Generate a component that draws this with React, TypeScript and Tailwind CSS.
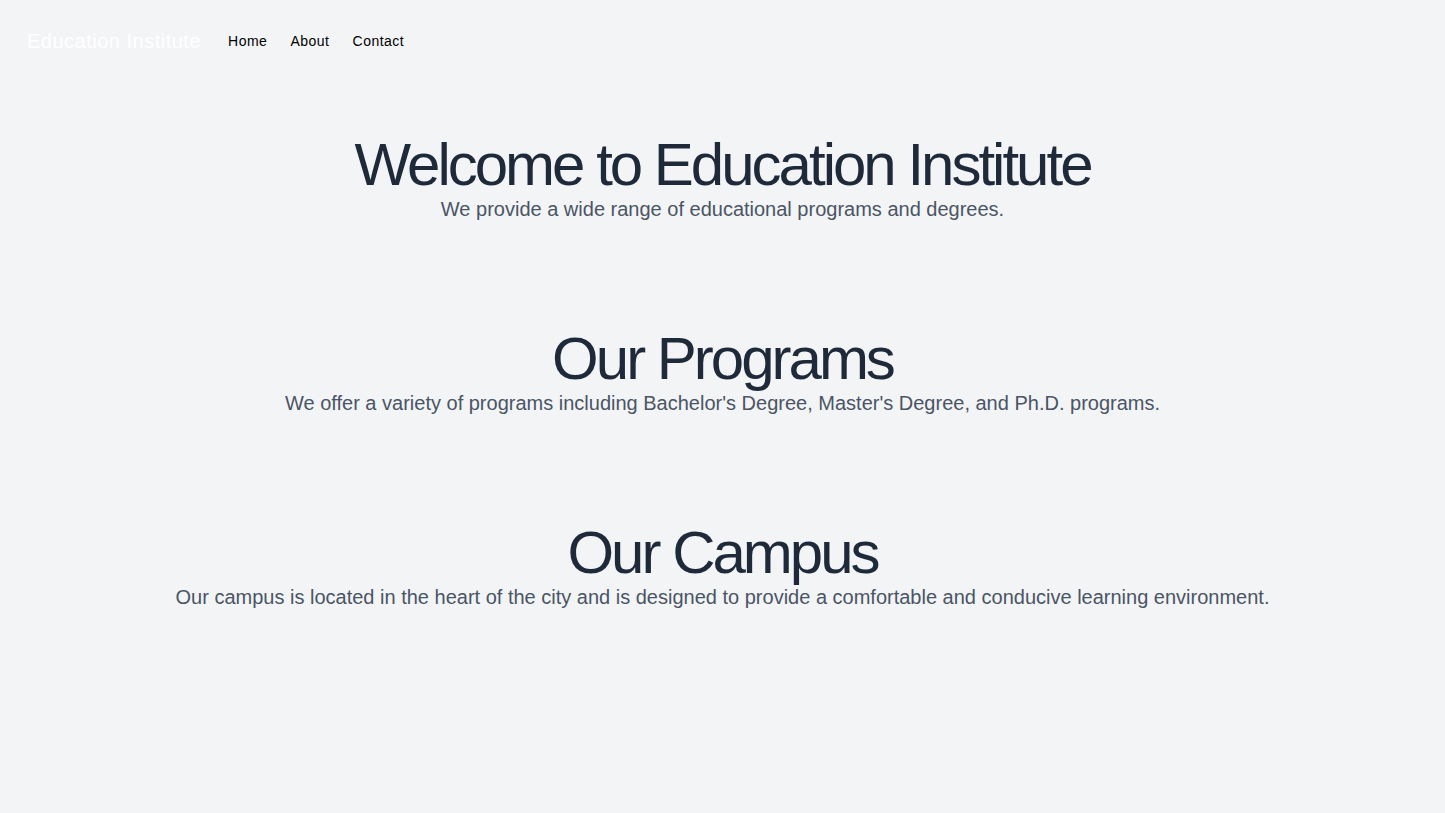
export default function App() {
  const sections = [
    {
      title: 'Welcome to Education Institute',
      text: 'We provide a wide range of educational programs and degrees.',
    },
    {
      title: 'Our Programs',
      text: "We offer a variety of programs including Bachelor's Degree, Master's Degree, and Ph.D. programs.",
    },
    {
      title: 'Our Campus',
      text: 'Our campus is located in the heart of the city and is designed to provide a comfortable and conducive learning environment.',
    },
  ]

  return (
    <div className="min-h-screen bg-gray-100 font-['Liberation_Sans',Arial,sans-serif]">
      <nav className="flex items-center px-[27px] py-[27px] tracking-[0.5px]">
        <span className="text-xl text-white mr-[27px]">Education Institute</span>
        <div className="flex gap-[23px] text-sm text-black">
          <a href="#">Home</a>
          <a href="#">About</a>
          <a href="#">Contact</a>
        </div>
      </nav>
      <main className="flex flex-col">
        {sections.map((s) => (
          <section key={s.title} className="py-[53px] text-center">
            <h1 className="text-6xl leading-none tracking-tighter text-gray-800">{s.title}</h1>
            <p className="text-xl text-gray-600">{s.text}</p>
          </section>
        ))}
      </main>
    </div>
  )
}
